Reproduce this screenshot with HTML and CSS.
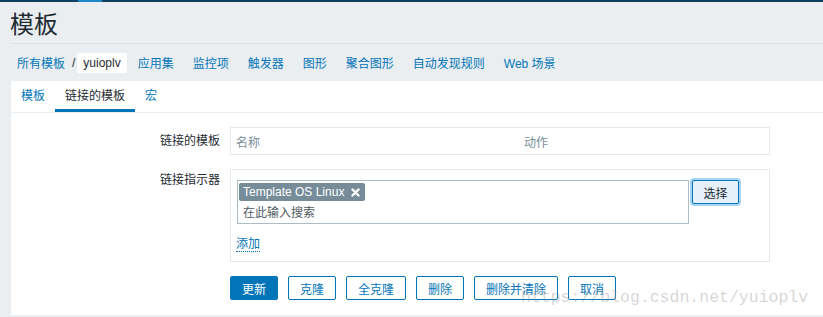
FILE: index.html
```html
<!doctype html>
<html>
<head>
    <meta charset="utf-8">
    <title>模板</title>
    <link rel="stylesheet" href="styles.css">
</head>
<body>
<div class="topbar"><span class="topbar-mark"></span></div>

<header class="page-header">
    <h1 class="page-title">模板</h1>
</header>

<nav class="breadcrumbs">
    <a class="crumb" href="#">所有模板</a>
    <span class="crumb-sep">/</span>
    <span class="crumb-current">yuioplv</span>
    <ul class="subnav">
        <li><a href="#">应用集</a></li>
        <li><a href="#">监控项</a></li>
        <li><a href="#">触发器</a></li>
        <li><a href="#">图形</a></li>
        <li><a href="#">聚合图形</a></li>
        <li><a href="#">自动发现规则</a></li>
        <li><a href="#">Web 场景</a></li>
    </ul>
</nav>

<main class="panel">
    <ul class="tabs">
        <li class="tab"><a href="#">模板</a></li>
        <li class="tab tab-active">链接的模板</li>
        <li class="tab"><a href="#">宏</a></li>
    </ul>

    <form class="form" action="#">
        <div class="form-row">
            <label class="form-label">链接的模板</label>
            <div class="form-field">
                <table class="linked-table">
                    <tr>
                        <th class="col-name">名称</th>
                        <th>动作</th>
                    </tr>
                </table>
            </div>
        </div>

        <div class="form-row">
            <label class="form-label form-label-top">链接指示器</label>
            <div class="form-field link-box">
                <div class="ms-row">
                    <div class="multiselect">
                        <span class="ms-tag">Template OS Linux
                            <svg class="ms-remove" width="9" height="9" viewBox="0 0 9 9">
                                <path d="M1.5 1.5 L7.5 7.5 M7.5 1.5 L1.5 7.5" stroke="#fff" stroke-width="2.4" stroke-linecap="round"/>
                            </svg>
                        </span>
                        <div class="ms-input">在此输入搜索</div>
                    </div>
                    <button type="button" class="btn-select">选择</button>
                </div>
                <a class="link-add" href="#">添加</a>
            </div>
        </div>

        <div class="form-actions">
            <button type="button" class="btn btn-primary">更新</button>
            <button type="button" class="btn">克隆</button>
            <button type="button" class="btn">全克隆</button>
            <button type="button" class="btn">删除</button>
            <button type="button" class="btn">删除并清除</button>
            <button type="button" class="btn">取消</button>
        </div>
    </form>

    <div class="watermark">https://blog.csdn.net/yuioplv</div>
</main>
</body>
</html>
```

FILE: styles.css
```css
body {
    margin: 0;
    background: #ebeef1;
    color: #1f2c33;
    font-family: "Liberation Sans", Arial, "Noto Sans CJK SC", sans-serif;
    font-size: 12px;
    overflow: hidden;
}

a {
    color: #0275b8;
    text-decoration: none;
}

/* top strip */
.topbar {
    height: 2px;
    background: #0e3f5f;
}

.topbar-mark {
    display: block;
    width: 24px;
    height: 2px;
    margin-left: 78px;
    background: #1f86cc;
}

.page-header {
    margin-left: 10px;
    padding: 7px 0 2px;
    border-bottom: 1px solid #dde2e6;
}

.page-title {
    margin: 0;
    font-size: 24px;
    font-weight: normal;
    line-height: 32px;
}

/* breadcrumbs + sub navigation */
.breadcrumbs {
    display: flex;
    align-items: center;
    height: 37px;
    padding-left: 17px;
}

.crumb-sep {
    margin: 0 2px 0 7px;
    color: #1f2c33;
}

.crumb-current {
    height: 20px;
    line-height: 20px;
    padding: 0 6px;
    background: #fff;
    border-radius: 2px;
}

.subnav {
    display: flex;
    gap: 19px;
    margin: 0 0 0 11px;
    padding: 0;
    list-style: none;
}

/* main white panel */
.panel {
    position: relative;
    margin-left: 11px;
    height: 234px;
    background: #fff;
}

.tabs {
    display: flex;
    margin: 0;
    padding: 0;
    list-style: none;
    border-bottom: 1px solid #ebeef1;
}

.tab {
    padding: 0 10px;
    height: 28px;
    line-height: 30px;
    border-bottom: 3px solid transparent;
}

.tab-active {
    border-bottom-color: #0275b8;
}

.form {
    padding-top: 14px;
}

.form-row {
    display: flex;
    gap: 10px;
    margin-bottom: 14px;
}

.form-label {
    width: 209px;
    padding-top: 7px;
    line-height: 14px;
    text-align: right;
}

.form-label-top {
    padding-top: 4px;
}

.form-field {
    width: 540px;
    box-sizing: border-box;
}

.linked-table {
    width: 100%;
    border-collapse: collapse;
    border: 1px solid #e6e9ec;
}

.linked-table th {
    height: 26px;
    padding: 0 5px;
    text-align: left;
    font-weight: normal;
    color: #768d99;
}

.linked-table .col-name {
    width: 278px;
}

.link-box {
    border: 1px solid #e6e9ec;
    padding: 10px 6px 9px 6px;
}

.ms-row {
    display: flex;
    align-items: flex-start;
    gap: 3px;
}

.multiselect {
    width: 452px;
    height: 44px;
    box-sizing: border-box;
    border: 1px solid #acbbc4;
    padding: 2px 0 0 1px;
}

.ms-tag {
    display: inline-flex;
    align-items: center;
    gap: 7px;
    height: 18px;
    padding: 0 5px 0 4px;
    background: #768d99;
    color: #fff;
    border-radius: 2px;
}

.ms-input {
    padding: 2px 0 0 4px;
    line-height: 20px;
    color: #4f5b63;
}

.btn-select {
    height: 24px;
    width: 47px;
    padding: 0;
    border: 1px solid #0275b8;
    border-radius: 2px;
    background: #e5f0fa;
    color: #1f2c33;
    font: inherit;
    box-shadow: 0 0 0 2px #a9d3f3;
}

.link-add {
    display: inline-block;
    margin: 13px 0 0 -1px;
    line-height: 14px;
    border-bottom: 1px dotted #0275b8;
}

.form-actions {
    display: flex;
    gap: 10px;
    margin-left: 219px;
}

.btn {
    height: 24px;
    padding: 0 11px;
    border: 1px solid #0275b8;
    border-radius: 2px;
    background: #fff;
    color: #0275b8;
    font: inherit;
}

.btn-primary {
    background: #0275b8;
    color: #fff;
}

.watermark {
    position: absolute;
    left: 510px;
    top: 207px;
    font-family: "Liberation Mono", monospace;
    font-size: 16.5px;
    color: rgba(150, 150, 150, 0.4);
    pointer-events: none;
}
```
